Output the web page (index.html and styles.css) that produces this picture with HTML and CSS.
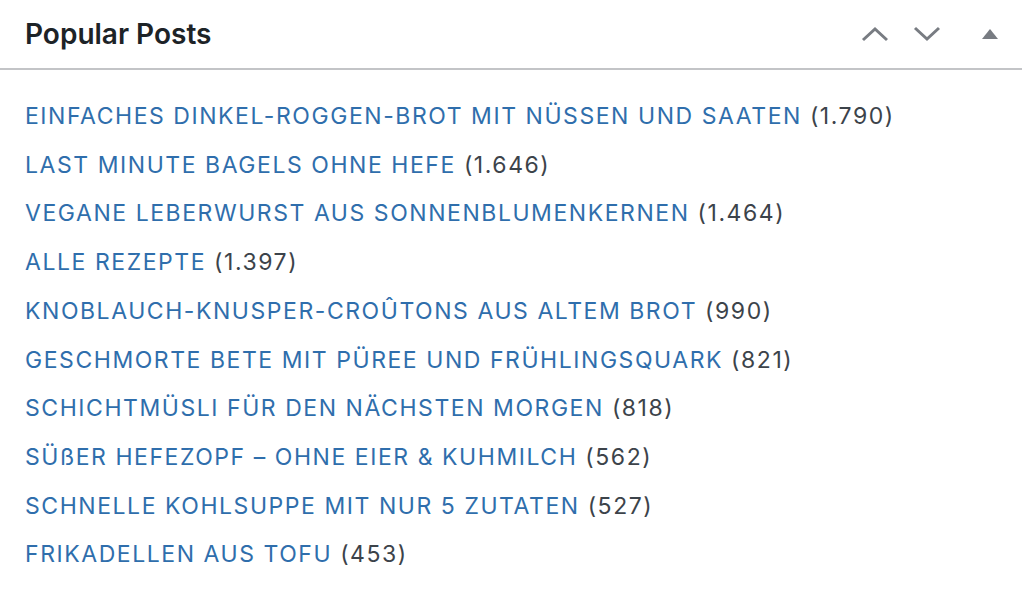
FILE: index.html
```html
<!DOCTYPE html>
<html>
<head>
    <title>Popular Posts</title>
    <link rel="stylesheet" href="styles.css">
</head>
<body>
    <div class="postbox">
        <div class="postbox-header">
            <h2 class="hndle">Popular Posts</h2>
            <div class="handle-actions">
                <button class="handle-btn" aria-label="Move up">
                    <svg width="28" height="16" viewBox="0 0 28 16"><path d="M2 14 L14 3 L26 14" fill="none" stroke="currentColor" stroke-width="3"/></svg>
                </button>
                <button class="handle-btn" aria-label="Move down">
                    <svg width="28" height="16" viewBox="0 0 28 16"><path d="M2 2 L14 13 L26 2" fill="none" stroke="currentColor" stroke-width="3"/></svg>
                </button>
                <button class="handle-btn toggle" aria-label="Toggle panel">
                    <svg width="16" height="10" viewBox="0 0 16 10"><path d="M8 0 L16 10 L0 10 Z" fill="currentColor"/></svg>
                </button>
            </div>
        </div>
        <div class="inside">
            <ul class="popular-list">
                <li><a href="#">EINFACHES DINKEL-ROGGEN-BROT MIT NÜSSEN UND SAATEN</a> (1.790)</li>
                <li><a href="#">LAST MINUTE BAGELS OHNE HEFE</a> (1.646)</li>
                <li><a href="#">VEGANE LEBERWURST AUS SONNENBLUMENKERNEN</a> (1.464)</li>
                <li><a href="#">ALLE REZEPTE</a> (1.397)</li>
                <li><a href="#">KNOBLAUCH-KNUSPER-CROÛTONS AUS ALTEM BROT</a> (990)</li>
                <li><a href="#">GESCHMORTE BETE MIT PÜREE UND FRÜHLINGSQUARK</a> (821)</li>
                <li><a href="#">SCHICHTMÜSLI FÜR DEN NÄCHSTEN MORGEN</a> (818)</li>
                <li><a href="#">SÜßER HEFEZOPF – OHNE EIER &amp; KUHMILCH</a> (562)</li>
                <li><a href="#">SCHNELLE KOHLSUPPE MIT NUR 5 ZUTATEN</a> (527)</li>
                <li><a href="#">FRIKADELLEN AUS TOFU</a> (453)</li>
            </ul>
        </div>
    </div>
</body>
</html>
```
FILE: styles.css
```css
body {
    font-family: Inter, "Liberation Sans", sans-serif;
    margin: 0;
    background-color: #fff;
    color: #3c434a;
}
.postbox-header {
    display: flex;
    align-items: center;
    justify-content: space-between;
    height: 68px;
    padding-left: 25px;
    border-bottom: 2px solid #c3c4c7;
}
.hndle {
    margin: 0;
    font-size: 28px;
    font-weight: 600;
    color: #1d2327;
}
.handle-actions {
    display: flex;
    align-items: center;
    padding-right: 24px;
}
.handle-btn {
    background: none;
    border: none;
    padding: 0;
    color: #787c82;
    display: flex;
    align-items: center;
    justify-content: center;
    width: 28px;
    height: 40px;
    margin-left: 24px;
}
.handle-btn.toggle {
    width: 16px;
    margin-left: 41px;
}
.inside {
    padding: 22px 25px;
}
.popular-list {
    list-style: none;
    margin: 0;
    padding: 0;
}
.popular-list li {
    font-size: 23px;
    letter-spacing: 1.55px;
    line-height: 48.7px;
}
.popular-list a {
    color: #2f6eac;
    text-decoration: none;
}
```
